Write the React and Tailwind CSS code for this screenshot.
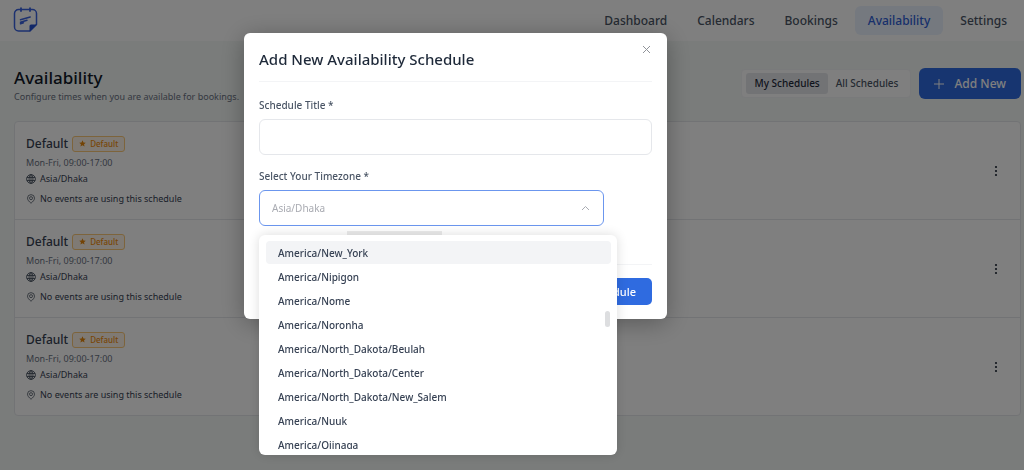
import React, { useState } from 'react';

const navItems = ['Dashboard', 'Calendars', 'Bookings', 'Availability', 'Settings'];

const schedules = [
  { id: 1, title: 'Default', hours: 'Mon-Fri, 09:00-17:00', timezone: 'Asia/Dhaka' },
  { id: 2, title: 'Default', hours: 'Mon-Fri, 09:00-17:00', timezone: 'Asia/Dhaka' },
  { id: 3, title: 'Default', hours: 'Mon-Fri, 09:00-17:00', timezone: 'Asia/Dhaka' },
];

const timezones = [
  'America/New_York',
  'America/Nipigon',
  'America/Nome',
  'America/Noronha',
  'America/North_Dakota/Beulah',
  'America/North_Dakota/Center',
  'America/North_Dakota/New_Salem',
  'America/Nuuk',
  'America/Ojinaga',
];

const Logo = () => (
  <svg width="25" height="26" viewBox="0 0 25 26" fill="none">
    <path
      d="M17 24H5.500A4 4 0 0 1 1.500 20V6.500A4 4 0 0 1 5.500 2.500h14A4 4 0 0 1 23.500 6.500v11Z"
      stroke="#3a63e0"
      strokeWidth="1.500"
      strokeLinejoin="round"
    />
    <path d="M8 1.200v2.800M17 1.200v2.800" stroke="#3a63e0" strokeWidth="1.800" strokeLinecap="round" />
    <path d="M16.500 24.500V19a1.500 1.500 0 0 1 1.500-1.500h6Z" fill="#2450d0" />
    <path d="M7.500 12.800 17.200 10M7.500 15.300l6.500-2M7.500 16.800l3-1" stroke="#3a63e0" strokeWidth="1.500" strokeLinecap="round" />
  </svg>
);

const StarIcon = () => (
  <svg width="7" height="7" viewBox="0 0 24 24" fill="#e6870a">
    <path d="m12 1 3.300 7.300 7.900.8-5.900 5.300 1.700 7.800-7-4-7 4 1.700-7.800L.8 9.100l7.900-.8Z" />
  </svg>
);

const GlobeIcon = () => (
  <svg width="10" height="10" viewBox="0 0 20 20" fill="none" stroke="#4b5563" strokeWidth="1.8">
    <circle cx="10" cy="10" r="8.800" />
    <ellipse cx="10" cy="10" rx="4" ry="8.800" />
    <path d="M1.800 7h16.400M1.800 13h16.400M10 1v18" />
  </svg>
);

const PinIcon = () => (
  <svg width="10" height="10" viewBox="0 0 20 20" fill="none" stroke="#4b5563" strokeWidth="1.600">
    <path d="M10 18.500c4-3.500 7-6.500 7-10.200a7 7 0 0 0-14 0c0 3.700 3 6.700 7 10.200Z" />
    <circle cx="10" cy="8.300" r="3" />
  </svg>
);

const ScheduleRow = ({ schedule }) => (
  <li className="flex items-center justify-between pl-[11px] pr-[15px] py-3">
    <div className="flex flex-col text-[9px] text-gray-700">
      <div className="flex items-center gap-1 h-[19px]">
        <h3 className="text-[12px] font-medium text-gray-700">{schedule.title}</h3>
        <span className="flex items-center gap-1 h-4 px-[6px] rounded-[3px] border border-[#fbc978] bg-[#fff5e8] text-[8px] font-medium text-[#f08c0c]">
          <StarIcon />
          Default
        </span>
      </div>
      <p className="h-[18px] leading-5 text-gray-500">{schedule.hours}</p>
      <p className="flex items-center gap-1 h-4">
        <GlobeIcon />
        {schedule.timezone}
      </p>
      <p className="flex items-center gap-1 h-5 pt-1">
        <PinIcon />
        No events are using this schedule
      </p>
    </div>
    <button type="button" aria-label="Schedule actions" className="p-1">
      <svg width="10" height="12" viewBox="0 0 10 12" fill="#1f2937">
        <circle cx="5" cy="2" r="1.100" />
        <circle cx="5" cy="6" r="1.100" />
        <circle cx="5" cy="10" r="1.100" />
      </svg>
    </button>
  </li>
);

const TimezoneSelect = () => {
  const [timezone, setTimezone] = useState('Asia/Dhaka');
  const [open, setOpen] = useState(true);

  const handlePick = (zone) => {
    setTimezone(zone);
    setOpen(false);
  };

  return (
    <div className="relative">
      <div className="relative mr-12">
        <select
          id="timezone"
          value={timezone}
          onChange={(e) => setTimezone(e.target.value)}
          className="block w-full h-9 px-3 appearance-none rounded-md border border-[#6b96ee] bg-white text-[10px] text-[#a9abb2] outline-none"
        >
          <option>Asia/Dhaka</option>
          {timezones.map((zone) => (
            <option key={zone}>{zone}</option>
          ))}
        </select>
        <svg
          className="absolute right-[14px] top-[14px] pointer-events-none"
          width="9"
          height="8"
          viewBox="0 0 9 8"
          fill="none"
          stroke="#a8abb2"
        >
          <path d="m1 6 3.500-3.500L8 6" />
        </svg>
      </div>
      {open && (
        <div className="absolute left-0 right-[35px] top-[45px] z-10 rounded-md bg-white py-[6px] pl-[7px] pr-[6px] shadow-[0_0_12px_rgba(0,0,0,0.14)]">
          <ul className="h-[208px] overflow-hidden">
            {timezones.map((zone, index) => (
              <li key={zone} className="pb-px">
                <button
                  type="button"
                  onClick={() => handlePick(zone)}
                  className={
                    'block w-full h-[23px] px-3 pt-[2px] rounded text-left text-[10px] font-medium text-gray-700 ' +
                    (index === 0 ? 'bg-gray-100' : 'bg-white')
                  }
                >
                  {zone}
                </button>
              </li>
            ))}
          </ul>
          {/* scroll thumb */}
          <span className="absolute right-[7px] top-[76px] w-[5px] h-4 rounded-full bg-[#dddee0]" />
        </div>
      )}
    </div>
  );
};

const AddScheduleModal = ({ onClose }) => {
  const [title, setTitle] = useState('');

  return (
    <div className="fixed inset-0 flex items-start justify-center bg-black/50 pt-[33px] pr-[113px]">
      <div
        role="dialog"
        aria-labelledby="modal-title"
        className="relative w-full max-w-[423px] rounded-md bg-white px-[15px] pb-[14px] shadow-[0_4px_24px_rgba(0,0,0,0.3)]"
      >
        <button type="button" aria-label="Close" onClick={onClose} className="absolute right-4 top-3">
          <svg width="9" height="9" viewBox="0 0 9 9" stroke="#909399">
            <path d="m1 1 7 7M8 1 1 8" />
          </svg>
        </button>
        <h2 id="modal-title" className="h-[49px] pt-4 border-b border-gray-100 text-[15px] leading-5 font-medium text-gray-800">
          Add New Availability Schedule
        </h2>
        <form className="flex flex-col" onSubmit={(e) => e.preventDefault()}>
          <label htmlFor="title" className="pt-[15px] pb-[6px] text-[10px] leading-4 font-medium text-gray-600">
            Schedule Title *
          </label>
          <input
            id="title"
            type="text"
            value={title}
            onChange={(e) => setTitle(e.target.value)}
            className="w-full h-9 px-3 rounded-md border border-gray-200 text-[10px] outline-none"
          />
          <label htmlFor="timezone" className="pt-[13px] pb-[6px] text-[10px] leading-4 font-medium text-gray-600">
            Select Your Timezone *
          </label>
          <TimezoneSelect />
          <div className="flex h-[39px] pt-[5px] border-b border-gray-100">
            <span className="ml-[88px] w-[95px] h-4 bg-[#ebebeb]" />
          </div>
          <button
            type="submit"
            className="self-end mt-[13px] h-[27px] px-4 pt-px rounded-[5px] bg-[#2f6be0] text-[11px] font-medium text-white"
          >
            Create Schedule
          </button>
        </form>
      </div>
    </div>
  );
};

const App = () => {
  const [tab, setTab] = useState('My Schedules');
  const [showModal, setShowModal] = useState(true);

  return (
    <div className="min-h-screen bg-[#f4f8f6] font-['Noto_Sans',sans-serif]">
      <header className="flex items-center justify-between h-[41px] pl-[13px] pr-1 bg-white">
        <a href="#" aria-label="Home" className="pb-[2px]">
          <Logo />
        </a>
        <nav className="flex gap-1 text-[12px] font-medium">
          {navItems.map((item) => (
            <a
              key={item}
              href="#"
              className={
                'px-[13px] pt-[6px] pb-[5px] rounded-md ' +
                (item === 'Availability' ? 'bg-[#eaf2ff] text-[#2f5fd6]' : 'text-gray-600')
              }
            >
              {item}
            </a>
          ))}
        </nav>
      </header>

      <main className="pl-[14px] pr-[3px] pt-[27px]">
        <div className="flex items-start justify-between h-[53px]">
          <div>
            <h1 className="text-[17px] leading-5 font-medium text-gray-900">Availability</h1>
            <p className="text-[9px] leading-[18px] text-gray-500">Configure times when you are available for bookings.</p>
          </div>
          <div className="flex items-center gap-2">
            <div className="flex items-center h-[29px] p-1 rounded border border-gray-100 bg-white text-[10px] font-medium">
              {['My Schedules', 'All Schedules'].map((name) => (
                <button
                  key={name}
                  type="button"
                  onClick={() => setTab(name)}
                  className={
                    'h-[21px] px-2 rounded-[3px] ' +
                    (tab === name ? 'bg-gray-200 text-gray-800' : 'text-gray-600')
                  }
                >
                  {name}
                </button>
              ))}
            </div>
            <button
              type="button"
              onClick={() => setShowModal(true)}
              className="flex items-center gap-[10px] h-[31px] px-[15px] rounded-md bg-[#2f6be0] text-[12px] font-medium text-white"
            >
              <svg width="10" height="10" viewBox="0 0 10 10" stroke="#fff">
                <path d="M5 0v10M0 5h10" />
              </svg>
              Add New
            </button>
          </div>
        </div>

        <ul className="rounded border border-gray-200 divide-y divide-gray-200 bg-white">
          {schedules.map((schedule) => (
            <ScheduleRow key={schedule.id} schedule={schedule} />
          ))}
        </ul>
      </main>

      {showModal && <AddScheduleModal onClose={() => setShowModal(false)} />}
    </div>
  );
};

export default App;
